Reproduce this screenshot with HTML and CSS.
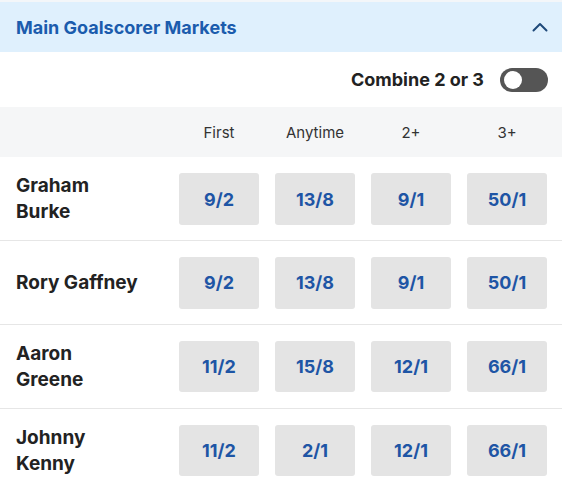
FILE: index.html
```html
<!DOCTYPE html>
<html>
<head>
<meta charset="utf-8">
<link rel="stylesheet" href="styles.css">
</head>
<body>
<div class="market">
  <div class="market-header">
    <span class="market-title">Main Goalscorer Markets</span>
    <svg class="chevron" width="16" height="10" viewBox="0 0 16 10"><path d="M1.5 8.5 L8 2 L14.5 8.5" fill="none" stroke="#1f4a7a" stroke-width="2" stroke-linecap="round" stroke-linejoin="round"/></svg>
  </div>
  <div class="combine-row">
    <span class="combine-label">Combine 2 or 3</span>
    <span class="toggle"><span class="knob"></span></span>
  </div>
  <div class="grid col-head">
    <span></span>
    <span class="col-label">First</span>
    <span class="col-label">Anytime</span>
    <span class="col-label">2+</span>
    <span class="col-label">3+</span>
  </div>
  <div class="grid player-row">
    <span class="name">Graham Burke</span>
    <button class="odds">9/2</button>
    <button class="odds">13/8</button>
    <button class="odds">9/1</button>
    <button class="odds">50/1</button>
  </div>
  <div class="grid player-row">
    <span class="name">Rory Gaffney</span>
    <button class="odds">9/2</button>
    <button class="odds">13/8</button>
    <button class="odds">9/1</button>
    <button class="odds">50/1</button>
  </div>
  <div class="grid player-row">
    <span class="name">Aaron Greene</span>
    <button class="odds">11/2</button>
    <button class="odds">15/8</button>
    <button class="odds">12/1</button>
    <button class="odds">66/1</button>
  </div>
  <div class="grid player-row">
    <span class="name">Johnny Kenny</span>
    <button class="odds">11/2</button>
    <button class="odds">2/1</button>
    <button class="odds">12/1</button>
    <button class="odds">66/1</button>
  </div>
</div>
</body>
</html>
```
FILE: styles.css
```css
* { box-sizing: border-box; }
html, body { margin: 0; padding: 0; background: #fff; }
body { font-family: Inter, "Noto Sans", "Liberation Sans", sans-serif; color: #222; }
.market { border-top: 2px solid #f3f6f9; }
.market-header {
  height: 50px;
  background: #dff0fd;
  display: flex;
  align-items: center;
  justify-content: space-between;
  padding: 0 14px 0 16px;
}
.market-title { font-size: 18px; font-weight: 700; color: #1b5cad; }
.chevron { display: block; }
.combine-row {
  height: 55px;
  display: flex;
  align-items: center;
  justify-content: flex-end;
  gap: 16px;
  padding: 0 14px 0 16px;
}
.combine-label { font-size: 18px; font-weight: 700; color: #222; }
.toggle {
  width: 48px; height: 24px;
  border-radius: 12px;
  background: #555;
  display: flex;
  align-items: center;
  padding-left: 4px;
}
.knob {
  width: 18px; height: 18px; border-radius: 50%;
  background: #fff;
}
.grid {
  display: grid;
  grid-template-columns: 1fr repeat(4, 80px);
  column-gap: 16px;
  padding: 0 15px 0 16px;
  align-items: center;
}
.col-head { height: 50px; background: #f5f6f7; }
.col-label { text-align: center; font-size: 15px; color: #333; }
.player-row { padding-top: 16px; padding-bottom: 15px; border-bottom: 1px solid #e6e6e6; }
.name { font-size: 19px; font-weight: 700; line-height: 26px; color: #222; max-width: 125px; }
.odds {
  height: 51.5px;
  border: none;
  border-radius: 3px;
  background: #e4e4e4;
  font-family: inherit;
  font-size: 18px;
  font-weight: 700;
  color: #1e55a5;
  padding: 0;
}
```
